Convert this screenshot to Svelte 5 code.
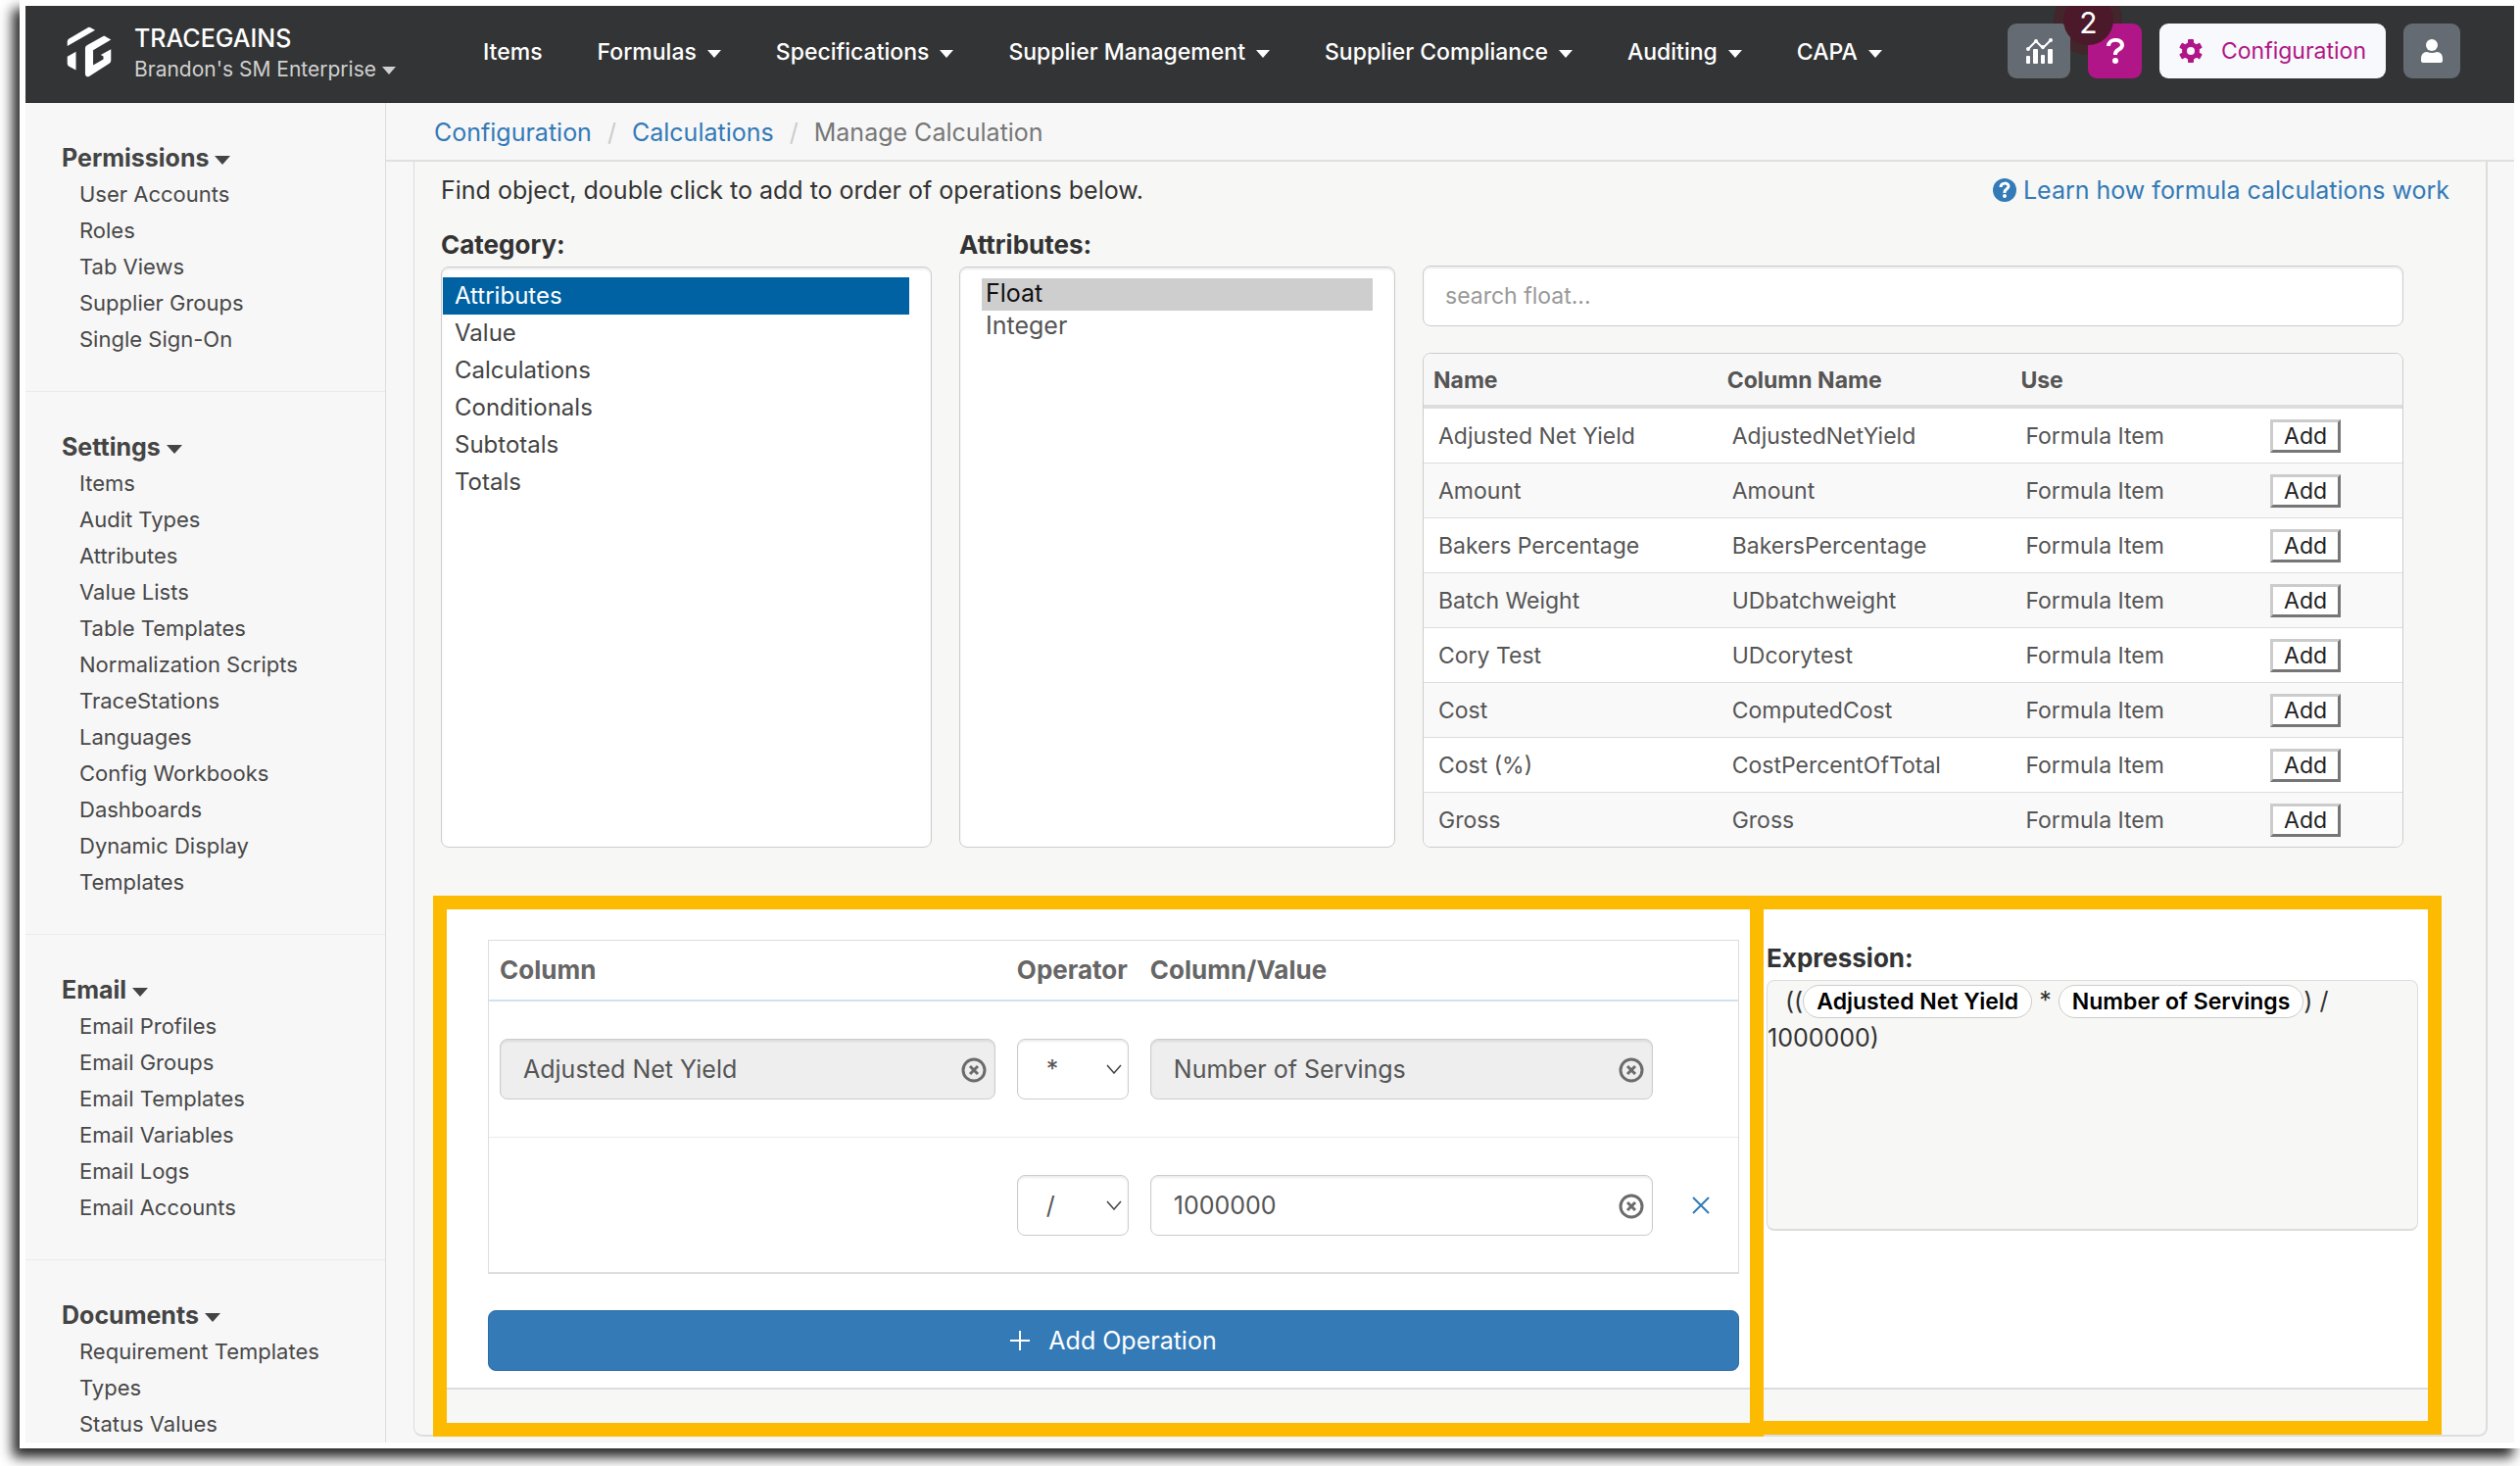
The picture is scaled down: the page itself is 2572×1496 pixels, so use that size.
<script lang="ts">
	const nav = [
		{ label: 'Items', menu: false },
		{ label: 'Formulas', menu: true },
		{ label: 'Specifications', menu: true },
		{ label: 'Supplier Management', menu: true },
		{ label: 'Supplier Compliance', menu: true },
		{ label: 'Auditing', menu: true },
		{ label: 'CAPA', menu: true }
	];

	const sections = [
		{
			title: 'Permissions',
			items: ['User Accounts', 'Roles', 'Tab Views', 'Supplier Groups', 'Single Sign-On']
		},
		{
			title: 'Settings',
			items: [
				'Items',
				'Audit Types',
				'Attributes',
				'Value Lists',
				'Table Templates',
				'Normalization Scripts',
				'TraceStations',
				'Languages',
				'Config Workbooks',
				'Dashboards',
				'Dynamic Display',
				'Templates'
			]
		},
		{
			title: 'Email',
			items: [
				'Email Profiles',
				'Email Groups',
				'Email Templates',
				'Email Variables',
				'Email Logs',
				'Email Accounts'
			]
		},
		{
			title: 'Documents',
			items: ['Requirement Templates', 'Types', 'Status Values']
		}
	];

	const categories = [
		'Attributes',
		'Value',
		'Calculations',
		'Conditionals',
		'Subtotals',
		'Totals'
	];

	const rows = [
		['Adjusted Net Yield', 'AdjustedNetYield'],
		['Amount', 'Amount'],
		['Bakers Percentage', 'BakersPercentage'],
		['Batch Weight', 'UDbatchweight'],
		['Cory Test', 'UDcorytest'],
		['Cost', 'ComputedCost'],
		['Cost (%)', 'CostPercentOfTotal'],
		['Gross', 'Gross']
	];

	const operators = ['+', '-', '*', '/'];

	let category = $state('Attributes');
	let attribute = $state('Float');
	let search = $state('');
	let firstOperator = $state('*');
	let secondOperator = $state('/');
	let column = $state('Adjusted Net Yield');
	let operand = $state('Number of Servings');
	let divisor = $state('1000000');
</script>

{#snippet clearIcon()}
	<svg viewBox="0 0 26 26" width="26" height="26" fill="none" stroke="#6b6b6b">
		<circle cx="13" cy="13" r="11" stroke-width="3" />
		<path d="M9 9l8 8M17 9l-8 8" stroke-width="3" />
	</svg>
{/snippet}

{#snippet chevron()}
	<svg class="chevron" viewBox="0 0 16 10" width="16" height="10" fill="none" stroke="#444">
		<path d="M1 1l7 8 7-8" stroke-width="1.5" />
	</svg>
{/snippet}

<div class="window">
	<header>
		<div class="brand">
			<svg class="logo" viewBox="85 50 136 154" width="46" height="52" fill="#fff">
				<path d="M150 53q3-1 6 0l15 8-84 48V96q0-5 4-8z" />
				<path d="M113 126v56l-21-11q-5-3-5-9v-21z" />
				<path
					d="M198 78l21 12-54 32v45l31-18v-9l-8-4 31-17v34q0 5-4 8l-61 39q-5 3-9 1-4-2-4-7v-78q0-6 5-9z"
				/>
			</svg>
			<div>
				<div class="name">TRACEGAINS</div>
				<a class="tenant" href="#tenant">Brandon's SM Enterprise <i class="caret"></i></a>
			</div>
		</div>
		<nav>
			{#each nav as item}
				<a href="#nav">{item.label}{#if item.menu}<i class="caret"></i>{/if}</a>
			{/each}
		</nav>
		<div class="tools">
			<button class="tool chart" aria-label="Reports">
				<svg viewBox="0 0 28 26" width="28" height="26" fill="#fff">
					<rect x="1" y="18" width="4" height="8" rx="1" />
					<rect x="8" y="11" width="5" height="15" rx="1" />
					<rect x="16" y="17" width="4" height="9" rx="1" />
					<rect x="23" y="11" width="5" height="15" rx="1" />
					<path d="M3 11l8-8 7 7 8-8" fill="none" stroke="#fff" stroke-width="2" />
					<circle cx="3" cy="11" r="2" />
					<circle cx="11" cy="3" r="2" />
					<circle cx="18" cy="9" r="2" />
					<circle cx="26" cy="2" r="2" />
				</svg>
			</button>
			<div class="help">
				<span class="halo"></span>
				<button class="tool pink" aria-label="Help">
					<svg viewBox="0 0 18 26" width="18" height="26" fill="none" stroke="#fff">
						<path d="M2 8C2 0 16 0 16 7c0 5-7 4-7 9v1" stroke-width="4" />
						<circle cx="9" cy="23" r="3" fill="#fff" stroke="none" />
					</svg>
				</button>
				<span class="count">2</span>
			</div>
			<button class="tool config">
				<svg viewBox="-12 -12 24 24" width="24" height="24" fill="#b01687">
					{#each [0, 60, 120] as angle}
						<rect x="-3" y="-12" width="6" height="24" rx="1" transform="rotate({angle})" />
					{/each}
					<circle r="9" />
					<circle r="4" fill="#f8f9fc" />
				</svg>
				Configuration
			</button>
			<button class="tool" aria-label="Account">
				<svg viewBox="0 0 22 26" width="22" height="26" fill="#fff">
					<circle cx="11" cy="7" r="6" />
					<path d="M6 14q5 2 10 0c4 0 6 3 6 7v2q0 2-2 2H2q-2 0-2-2v-2c0-4 2-7 6-7z" />
				</svg>
			</button>
		</div>
	</header>

	<div class="body">
		<aside>
			{#each sections as section}
				<section>
					<h2>{section.title} <i class="caret"></i></h2>
					<ul>
						{#each section.items as item}
							<li><a href="#config">{item}</a></li>
						{/each}
					</ul>
				</section>
			{/each}
		</aside>

		<main>
			<div class="breadcrumb">
				<a href="#configuration">Configuration</a>
				<span class="slash">/</span>
				<a href="#calculations">Calculations</a>
				<span class="slash">/</span>
				<span>Manage Calculation</span>
			</div>

			<div class="panel">
				<div class="intro">
					<span>Find object, double click to add to order of operations below.</span>
					<a href="#learn">
						<svg viewBox="0 0 26 26" width="26" height="26" fill="none">
							<circle cx="13" cy="13" r="12" fill="#337ab7" />
							<path d="M9 10c0-5 8-5 8-1 0 3-4 3-4 6v1" stroke="#fff" stroke-width="3" />
							<circle cx="13" cy="19" r="2" fill="#fff" />
						</svg>
						Learn how formula calculations work
					</a>
				</div>

				<div class="finder">
					<div class="field">
						<span class="label" id="category-label">Category:</span>
						<ul class="box" aria-labelledby="category-label">
							{#each categories as name}
								<li>
									<button class:active={category === name} onclick={() => (category = name)}>
										{name}
									</button>
								</li>
							{/each}
						</ul>
					</div>
					<div class="field">
						<label class="label" for="attribute">Attributes:</label>
						<select class="box" id="attribute" size="8" bind:value={attribute}>
							<option>Float</option>
							<option>Integer</option>
						</select>
					</div>
					<div class="results">
						<input
							class="search"
							type="text"
							aria-label="Search"
							placeholder="search float..."
							bind:value={search}
						/>
						<div class="grid">
							<table>
								<thead>
									<tr>
										<th>Name</th>
										<th>Column Name</th>
										<th class="use">Use</th>
										<th class="action"></th>
									</tr>
								</thead>
								<tbody>
									{#each rows as [name, columnName]}
										<tr>
											<td>{name}</td>
											<td>{columnName}</td>
											<td>Formula Item</td>
											<td><button>Add</button></td>
										</tr>
									{/each}
								</tbody>
							</table>
						</div>
					</div>
				</div>

				<div class="highlights">
					<div class="highlight operations">
						<div class="card">
							<table>
								<thead>
									<tr>
										<th class="column">Column</th>
										<th class="operator">Operator</th>
										<th class="operand">Column/Value</th>
										<th></th>
									</tr>
								</thead>
								<tbody>
									<tr>
										<td>
											<div class="control">
												<input type="text" aria-label="Column" readonly bind:value={column} />
												<button aria-label="Clear" onclick={() => (column = '')}>
													{@render clearIcon()}
												</button>
											</div>
										</td>
										<td>
											<div class="control">
												<select aria-label="Operator" bind:value={firstOperator}>
													{#each operators as op}<option>{op}</option>{/each}
												</select>
												{@render chevron()}
											</div>
										</td>
										<td>
											<div class="control">
												<input type="text" aria-label="Value" readonly bind:value={operand} />
												<button aria-label="Clear" onclick={() => (operand = '')}>
													{@render clearIcon()}
												</button>
											</div>
										</td>
										<td></td>
									</tr>
									<tr>
										<td></td>
										<td>
											<div class="control">
												<select aria-label="Operator" bind:value={secondOperator}>
													{#each operators as op}<option>{op}</option>{/each}
												</select>
												{@render chevron()}
											</div>
										</td>
										<td>
											<div class="control">
												<input type="text" aria-label="Value" bind:value={divisor} />
												<button aria-label="Clear" onclick={() => (divisor = '')}>
													{@render clearIcon()}
												</button>
											</div>
										</td>
										<td class="remove">
											<button aria-label="Remove operation">
												<svg viewBox="0 0 18 18" width="18" height="18" stroke="#337ab7">
													<path d="M1 1l16 16M17 1L1 17" stroke-width="2" />
												</svg>
											</button>
										</td>
									</tr>
								</tbody>
							</table>
							<button class="add">
								<svg viewBox="0 0 20 20" width="20" height="20" stroke="#fff">
									<path d="M10 0v20M0 10h20" stroke-width="2" />
								</svg>
								Add Operation
							</button>
						</div>
					</div>
					<div class="highlight expression">
						<div class="card">
							<div class="label">Expression:</div>
							<div class="formula">
								<span class="open">((</span><b>Adjusted Net Yield</b>
								<span>*</span>
								<b>Number of Servings</b><span>) /</span>
								<span>1000000)</span>
							</div>
						</div>
					</div>
				</div>
			</div>
		</main>
	</div>
</div>

<style>
	:global(body) {
		background: #fff;
		overflow: hidden;
	}

	.window {
		margin: 0 0 20px 20px;
		padding: 6px;
		background: #fff;
		box-shadow: -7px 9px 12px rgba(0, 0, 0, 0.85);
		color: #333;
		font-family: Inter, sans-serif;
		font-size: 25px;
		line-height: 36px;
	}

	a {
		color: #337ab7;
		text-decoration: none;
	}

	button,
	input,
	select,
	th {
		box-sizing: border-box;
		font: inherit;
	}

	ul {
		margin: 0;
		padding: 0;
		list-style: none;
	}

	.caret {
		display: inline-block;
		border: 8px solid transparent;
		border-top: 9px solid currentColor;
		border-bottom: 0;
		vertical-align: middle;
	}

	header {
		display: flex;
		align-items: flex-start;
		height: 99px;
		box-sizing: border-box;
		overflow: hidden;
		border-bottom: 1px solid #1e1f20;
		background: #333435;
		color: #fff;
	}

	.brand {
		display: flex;
		gap: 23px;
		width: 467px;
		padding: 17px 0 0 42px;
		box-sizing: border-box;
	}

	.logo {
		margin-top: 4px;
	}

	.name {
		line-height: 32px;
		font-weight: 500;
	}

	.tenant {
		display: block;
		color: #d0d0d0;
		font-size: 21px;
		line-height: 32px;
	}

	nav {
		display: flex;
		gap: 56px;
		padding-top: 29px;
	}

	nav a {
		color: #fff;
		font-size: 23px;
		font-weight: 500;
		white-space: nowrap;
	}

	.tenant .caret,
	nav .caret {
		border-width: 8px 7px 0;
	}

	nav .caret {
		margin-left: 11px;
	}

	.tools {
		display: flex;
		gap: 18px;
		margin: 18px 55px 0 auto;
	}

	.tool {
		display: flex;
		align-items: center;
		justify-content: center;
		width: 58px;
		height: 56px;
		padding: 0;
		border: 0;
		border-radius: 9px;
		background: #656b73;
	}

	.tool.chart {
		position: relative;
		z-index: 1;
		width: 64px;
	}

	.tool.pink {
		position: relative;
		width: 55px;
		background: #b01687;
	}

	.tool.config {
		gap: 19px;
		width: 231px;
		background: #f8f9fc;
		color: #b01687;
		font-size: 23px;
	}

	.help {
		position: relative;
	}

	.halo,
	.count {
		position: absolute;
		border-radius: 50%;
	}

	.halo {
		top: -38px;
		left: -35px;
		width: 70px;
		height: 70px;
		background: #43252c;
	}

	.count {
		z-index: 2;
		top: -29px;
		left: -25px;
		width: 51px;
		height: 51px;
		background: #4b1929;
		font-size: 30px;
		line-height: 56px;
		text-align: center;
	}

	.body {
		display: flex;
		background: #f7f7f7;
	}

	aside {
		flex: none;
		width: 367px;
		border-right: 1px solid #ddd;
	}

	section {
		padding: 38px 0 34px 37px;
		border-bottom: 1px solid #eaeaea;
	}

	section:last-child {
		padding-bottom: 0;
		border: 0;
	}

	h2 {
		margin: 0;
		color: #444;
		font-size: 25px;
		font-weight: 700;
		line-height: 37px;
	}

	aside ul {
		padding-left: 18px;
	}

	aside li {
		line-height: 37px;
		font-size: 22px;
	}

	aside li a {
		color: #484848;
	}

	main {
		flex: 1;
		min-width: 0;
	}

	.breadcrumb {
		padding: 12px 49px 10px;
		border-bottom: 2px solid #e0e0e0;
		color: #777;
	}

	.slash {
		margin: 0 9px;
		color: #ccc;
	}

	.panel {
		margin: 0 27px 4px 28px;
		border: 1px solid #ddd;
		border-width: 0 2px 2px 1px;
		border-radius: 0 0 9px 9px;
		background: #f7f7f5;
	}

	.intro {
		display: flex;
		justify-content: space-between;
		padding: 11px 37px 0 27px;
	}

	.intro a {
		display: flex;
		align-items: center;
		gap: 6px;
	}

	.finder {
		display: grid;
		grid-template-columns: 501fr 445fr 1001fr;
		gap: 28px;
		padding: 20px 84px 0 27px;
	}

	.field {
		display: flex;
		flex-direction: column;
		gap: 4px;
		min-width: 0;
	}

	.label {
		font-size: 26px;
		font-weight: 700;
	}

	.box {
		flex: 1;
		box-sizing: border-box;
		width: 100%;
		padding: 10px 22px 0 1px;
		border: 1px solid #ccc;
		border-radius: 8px;
		background: #fff;
		box-shadow: inset 0 2px 2px rgba(0, 0, 0, 0.08);
	}

	ul.box button {
		display: block;
		width: 100%;
		height: 38px;
		padding: 0 12px;
		border: 0;
		background: none;
		color: #444;
		font-size: 24px;
		text-align: left;
	}

	ul.box button.active {
		background: #0062a3;
		color: #fff;
	}

	select.box {
		padding: 11px 22px;
		color: #555;
		outline: none;
		overflow: hidden;
	}

	select.box option {
		min-height: 33px;
		padding: 0 4px;
		line-height: 33px;
	}

	.results {
		padding-top: 39px;
		min-width: 0;
	}

	.search {
		display: block;
		width: 100%;
		height: 62px;
		padding: 0 22px;
		border: 1px solid #ccc;
		border-radius: 8px;
		background: #fff;
		box-shadow: inset 0 2px 2px rgba(0, 0, 0, 0.08);
		font-size: 23px;
	}

	.search::placeholder {
		color: #999;
	}

	.grid {
		margin-top: 27px;
		border: 1px solid #ccc;
		border-radius: 8px;
		background: #fff;
		overflow: hidden;
	}

	table {
		width: 100%;
		table-layout: fixed;
		border-spacing: 0;
	}

	th {
		color: #555;
		font-weight: 700;
		text-align: left;
	}

	.grid th {
		width: 30%;
		height: 56px;
		padding: 2px 10px 0;
		border-bottom: 4px solid #ddd;
		background: #f7f7f7;
		font-size: 23px;
	}

	.grid th.use {
		width: 25%;
	}

	.grid th.action {
		width: 15%;
	}

	.grid td {
		height: 55px;
		padding: 0 15px;
		border-bottom: 1px solid #ddd;
		color: #555;
		font-size: 23px;
	}

	.grid tr:last-child td {
		border-bottom: 0;
	}

	.grid tr:nth-child(even) td {
		background: #f9f9f9;
	}

	.grid button {
		display: block;
		width: 72px;
		height: 34px;
		padding: 0;
		border: 3px solid;
		border-color: #ccc #767676 #767676 #ccc;
		background: #fff;
		color: #222;
		line-height: 28px;
	}

	.highlights {
		display: grid;
		grid-template-columns: 1344fr 706fr;
		margin: 49px 45px -2px 19px;
	}

	.highlight {
		display: flex;
		border: 14px solid #fcbb00;
		padding-bottom: 34px;
		background: #f7f7f5;
	}

	.operations {
		margin-right: -14px;
	}

	.expression {
		margin-bottom: 2px;
		padding-bottom: 32px;
	}

	.card {
		flex: 1;
		min-width: 0;
		border-bottom: 2px solid #ddd;
		background: #fff;
	}

	.operations .card {
		padding: 31px 11px 17px 42px;
	}

	.operations table {
		border: 1px solid #ddd;
		border-bottom-width: 2px;
	}

	.operations th {
		height: 62px;
		padding: 0 11px;
		border-bottom: 2px solid #d3e1ef;
		color: #666;
		font-size: 26px;
	}

	th.column {
		width: 41.4%;
	}

	th.operator {
		width: 136px;
	}

	th.operand {
		width: 42%;
	}

	.operations td {
		height: 138px;
		padding: 0 11px;
	}

	.operations tr + tr td {
		height: 137px;
		border-top: 1px solid #eaeaea;
	}

	.control {
		position: relative;
	}

	.control input,
	.control select {
		display: block;
		width: 100%;
		height: 62px;
		padding: 0 23px;
		border: 1px solid #ccc;
		border-radius: 8px;
		appearance: none;
		background: #fff;
		box-shadow: inset 0 2px 2px rgba(0, 0, 0, 0.08);
		color: #555;
	}

	.control select {
		padding: 0 29px;
	}

	.control input:read-only {
		background: #eee;
	}

	.control button {
		position: absolute;
		top: 19px;
		right: 9px;
		display: flex;
		padding: 0;
		border: 0;
		background: none;
	}

	.chevron {
		position: absolute;
		top: 26px;
		right: 7px;
		pointer-events: none;
	}

	.remove button {
		display: flex;
		margin: 0 auto;
		padding: 0;
		border: 0;
		background: none;
	}

	.add {
		display: flex;
		align-items: center;
		justify-content: center;
		gap: 19px;
		width: 100%;
		height: 62px;
		margin-top: 37px;
		border: 1px solid #2e6da4;
		border-radius: 8px;
		background: #337ab7;
		color: #fff;
	}

	.expression .card {
		padding: 32px 10px 0 3px;
	}

	.formula {
		box-sizing: border-box;
		min-height: 256px;
		margin-top: 4px;
		padding: 1px 0;
		border: 1px solid #ddd;
		border-bottom-width: 2px;
		border-radius: 8px;
		background: #f7f7f5;
		line-height: 38px;
	}

	.open {
		padding-left: 18px;
	}

	.formula b {
		display: inline-block;
		padding: 0 13px;
		border: 1px solid #ccc;
		border-radius: 17px;
		background: #fff;
		color: #000;
		font-size: 23px;
		font-weight: 600;
		line-height: 32px;
	}
</style>
